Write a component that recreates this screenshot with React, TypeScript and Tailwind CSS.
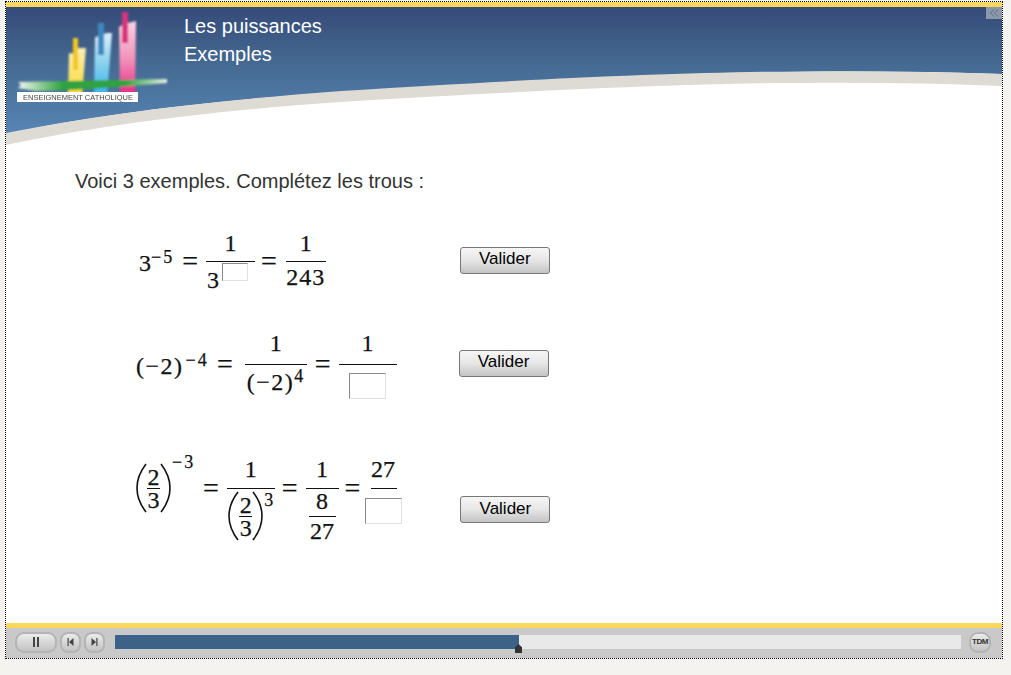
import React from 'react';

const serif = "font-['Liberation_Serif',serif]";

const Frac: React.FC<{
  num: React.ReactNode;
  den: React.ReactNode;
  width: string;
  numH: string;
  denH: string;
}> = ({ num, den, width, numH, denH }) => (
  <div className={`flex flex-col items-center ${width}`}>
    <div className={`flex items-center justify-center ${numH}`}>{num}</div>
    <div className="h-px w-full bg-[#111]"></div>
    <div className={`flex items-center justify-center ${denH}`}>{den}</div>
  </div>
);

const Blank: React.FC<{ size: string }> = ({ size }) => (
  <span
    className={`block ${size} bg-white border border-[#e0e0e0] border-l-[#8a8a8a] border-t-[#8a8a8a]`}
  ></span>
);

const Eq: React.FC<{ className: string }> = ({ className }) => (
  <span className={`text-[28px] leading-none ${className}`}>=</span>
);

const Sup: React.FC<{ children: React.ReactNode; className?: string }> = ({ children, className = '' }) => (
  <span className={`text-[18px] leading-none ${className}`}>{children}</span>
);

// grande parenthèse dessinée
const Paren: React.FC<{ flip?: boolean }> = ({ flip }) => (
  <svg width="11" height="50" viewBox="0 0 11 50" className={flip ? 'block -scale-x-100' : 'block'}>
    <path d="M10 1C3 10 1 18 1 25s2 15 9 24" fill="none" stroke="#111" strokeWidth="1.6" />
  </svg>
);

const TwoThirds: React.FC = () => (
  <div className="flex items-center">
    <Paren />
    <Frac
      width="w-[13px]"
      numH="h-[24px] pt-[2px]"
      denH="h-[24px] pb-[2px]"
      num={<span className="leading-[20px]">2</span>}
      den={<span className="leading-[20px]">3</span>}
    />
    <Paren flip />
  </div>
);

const Valider: React.FC<{ className?: string }> = ({ className = '' }) => (
  <button
    className={`w-[90px] h-[27px] rounded-[3px] border border-[#777] bg-gradient-to-b from-[#f6f6f6] via-[#e6e6e6] to-[#c4c4c4] text-[17px] leading-none text-black pb-[3px] [-webkit-text-stroke:0] font-['Liberation_Sans',sans-serif] ${className}`}
  >
    Valider
  </button>
);

const Banner: React.FC = () => (
  <svg viewBox="0 0 996 140" width="996" height="140" className="block" preserveAspectRatio="none">
    <defs>
      <linearGradient id="sky" x1="0" y1="0" x2="0" y2="1">
        <stop offset="0" stopColor="#354a78" />
        <stop offset="0.45" stopColor="#456a92" />
        <stop offset="1" stopColor="#5785b5" />
      </linearGradient>
      <linearGradient id="yel" x1="0" y1="0" x2="0" y2="1">
        <stop offset="0" stopColor="#fbeeb4" />
        <stop offset="1" stopColor="#fcd92c" />
      </linearGradient>
      <linearGradient id="blu" x1="0" y1="0" x2="0" y2="1">
        <stop offset="0" stopColor="#d9eef8" />
        <stop offset="1" stopColor="#33b2e6" />
      </linearGradient>
      <linearGradient id="pnk" x1="0" y1="0" x2="0" y2="1">
        <stop offset="0" stopColor="#f9d3e3" />
        <stop offset="0.5" stopColor="#f393bb" />
        <stop offset="1" stopColor="#e6267f" />
      </linearGradient>
      <linearGradient id="grn" x1="0" y1="0" x2="1" y2="0">
        <stop offset="0" stopColor="#f2f7ee" />
        <stop offset="0.3" stopColor="#2fa33f" />
        <stop offset="0.72" stopColor="#2fa33f" />
        <stop offset="1" stopColor="#e8f2e4" />
      </linearGradient>
      <filter id="soft">
        <feGaussianBlur stdDeviation="0.8" />
      </filter>
      <filter id="softer">
        <feGaussianBlur stdDeviation="0.3" />
      </filter>
    </defs>
    <rect width="996" height="140" fill="#fff" />
    <path d="M0 0H996V67C800 60 620 68 335 85C200 94 90 108 0 127Z" fill="url(#sky)" />
    <path
      d="M0 126C90 108 200 94 335 84C620 66 800 60 996 67V79C800 71 620 78 335 95C200 104 90 119 0 138Z"
      fill="#dedbd5"
    />
    <g filter="url(#soft)">
      <path d="M63 46L70 47L72 41L80 41L76 89H62Z" fill="url(#yel)" />
      <rect x="67" y="31" width="5" height="32" fill="#f3c81c" />
      <path d="M89 30L96 29L100 26L106 26L101 89H88Z" fill="url(#blu)" />
      <rect x="92" y="16" width="6" height="32" fill="#3d88c0" />
      <path d="M113 20L118 17L130 14L129 89H114Z" fill="url(#pnk)" />
      <rect x="116" y="5" width="6" height="31" fill="#d8357f" />
      <path d="M12 75L161 72V76C110 80 60 84 30 84L12 81L15 78Z" fill="url(#grn)" />
    </g>
    <rect x="11" y="85" width="121" height="10" fill="#fff" />
    <text
      x="17"
      y="93"
      fontSize="7.6"
      fill="#444"
      filter="url(#softer)"
      fontFamily="Liberation Sans, sans-serif"
      textLength="110"
      lengthAdjust="spacingAndGlyphs"
    >
      ENSEIGNEMENT CATHOLIQUE
    </text>
  </svg>
);

const CtrlBtn: React.FC<{ className: string; children: React.ReactNode }> = ({ className, children }) => (
  <button
    className={`flex items-center justify-center h-[21px] border-2 border-[#b4b4b4] bg-gradient-to-b from-[#ececec] to-[#c2c2c2] ${className}`}
  >
    {children}
  </button>
);

const App: React.FC = () => {
  return (
    <div className="w-[1011px] h-[675px] bg-[#f4f3ef] pt-px pl-[5px] overflow-hidden font-['Liberation_Sans',sans-serif]">
      <div className="w-[998px] h-[658px] border border-dotted border-black flex flex-col bg-white">
        <div className="h-[5px] bg-[#fbd75b]"></div>

        {/* En-tête */}
        <header className="relative h-[140px]">
          <Banner />
          <div className="absolute left-[178px] top-[5px] text-[20px] leading-[28px] text-white">
            <p>Les puissances</p>
            <p>Exemples</p>
          </div>
          <div className="absolute right-0 top-0 w-[16px] h-[12px] bg-[#8b98ac] flex items-center justify-center">
            <svg width="10" height="8" viewBox="0 0 10 8">
              <path d="M5 0.5L1.5 4L5 7.5M9 0.5L5.5 4L9 7.5" fill="none" stroke="#5f6f85" strokeWidth="1" />
            </svg>
          </div>
        </header>

        {/* Contenu */}
        <main className={`flex-1 min-h-0 text-[24px] leading-none text-[#111] [-webkit-text-stroke:0.25px_#111] ${serif}`}>
          <p className="pt-[22px] pl-[69px] h-[46px] text-[20px] leading-[24px] text-[#333] [-webkit-text-stroke:0] font-['Liberation_Sans',sans-serif]">
            Voici 3 exemples. Complétez les trous :
          </p>

          <div className="mt-[38px] h-[60px] flex items-center pl-[133px]">
            <span>
              3<Sup className="align-[8px] tracking-[2px]">−5</Sup>
            </span>
            <Eq className="ml-[8px]" />
            <Frac
              width="w-[49px] ml-[8px]"
              numH="h-[30px] pb-[6px]"
              denH="h-[30px] w-full justify-start pl-px"
              num={<span>1</span>}
              den={
                <>
                  <span className="mt-[6px]">3</span>
                  <span className="ml-[3px] mb-[10px]">
                    <Blank size="w-[26px] h-[18px]" />
                  </span>
                </>
              }
            />
            <Eq className="ml-[6px]" />
            <Frac
              width="w-[40px] ml-[9px]"
              numH="h-[30px] pb-[6px]"
              denH="h-[30px] tracking-[1px]"
              num={<span>1</span>}
              den={<span>243</span>}
            />
            <Valider className="ml-[134px] mb-[2px]" />
          </div>

          <div className="mt-[35px] h-[76px] flex items-center pl-[130px]">
            <span className="w-[77px] tracking-[1.5px]">
              (−2)<Sup className="align-[8px] tracking-[2px] ml-[2px]">−4</Sup>
            </span>
            <Eq className="ml-[4px]" />
            <Frac
              width="w-[62px] ml-[12px]"
              numH="h-[38px] pb-[4px]"
              denH="h-[38px] pb-[7px]"
              num={<span>1</span>}
              den={
                <span className="tracking-[1.5px]">
                  (−2)<Sup className="align-[8px]">4</Sup>
                </span>
              }
            />
            <Eq className="ml-[8px]" />
            <Frac
              width="w-[58px] ml-[8px]"
              numH="h-[38px] pb-[4px]"
              denH="h-[38px] pt-[4px]"
              num={<span>1</span>}
              den={<Blank size="w-[37px] h-[26px]" />}
            />
            <Valider className="ml-[62px] mb-[2px]" />
          </div>

          <div className="mt-[31px] h-[110px] flex items-center pl-[130px]">
            <div className="flex items-start w-[59px]">
              <TwoThirds />
              <Sup className="tracking-[2px] ml-[1px] -mt-[10px]">−3</Sup>
            </div>
            <Eq className="ml-[8px]" />
            <Frac
              width="w-[48px] ml-[8px]"
              numH="h-[55px] pt-[18px]"
              denH="h-[55px]"
              num={<span>1</span>}
              den={
                <div className="flex items-start">
                  <TwoThirds />
                  <Sup className="ml-[1px]">3</Sup>
                </div>
              }
            />
            <Eq className="ml-[7px]" />
            <Frac
              width="w-[33px] ml-[8px]"
              numH="h-[55px] pt-[18px]"
              denH="h-[55px] flex-col"
              num={<span>1</span>}
              den={
                <div className="w-[27px]">
                  <div className="text-center pb-[3px]">8</div>
                  <div className="h-px bg-[#111]"></div>
                  <div className="text-center pt-[2px]">27</div>
                </div>
              }
            />
            <Eq className="ml-[6px]" />
            <div className="ml-[5px] w-[37px] flex flex-col items-center">
              <div className="h-[55px] w-[26px] flex flex-col">
                <div className="flex-1 flex items-center justify-center pt-[17px] pr-[2px]">27</div>
              </div>
              <div className="h-px w-[26px] bg-[#111]"></div>
              <div className="h-[55px] pt-[9px]">
                <Blank size="w-[37px] h-[26px]" />
              </div>
            </div>
            <Valider className="ml-[58px] mt-[43px]" />
          </div>
        </main>

        <div className="h-[5px] bg-[#fbd75b]"></div>

        {/* Barre de lecture */}
        <footer className="h-[30px] bg-[#c9c9c9] flex items-center pb-[2px] pl-[9px] pr-[11px]">
          <CtrlBtn className="w-[42px] rounded-[9px]">
            <svg width="10" height="10" viewBox="0 0 10 10">
              <path d="M2 0H4V10H2ZM6 0H8V10H6Z" fill="#444" />
            </svg>
          </CtrlBtn>
          <CtrlBtn className="w-[21px] rounded-[8px] ml-[3px]">
            <svg width="7" height="8" viewBox="0 0 7 8">
              <path d="M0.5 0H1.7V8H0.5ZM6.5 0V8L2 4Z" fill="#444" />
            </svg>
          </CtrlBtn>
          <CtrlBtn className="w-[21px] rounded-[8px] ml-[3px]">
            <svg width="7" height="8" viewBox="0 0 7 8">
              <path d="M6.5 0H5.3V8H6.5ZM0.5 0V8L5 4Z" fill="#444" />
            </svg>
          </CtrlBtn>
          <div className="relative flex-1 h-[14px] ml-[10px] bg-[#e9e9e9]">
            <div className="h-full w-[404px] bg-[#3c6287]"></div>
            <div className="absolute left-[400px] top-[9px] w-[7px] h-[9px] bg-[#333] [clip-path:polygon(50%_0,100%_35%,100%_100%,0_100%,0_35%)]"></div>
          </div>
          <CtrlBtn className="w-[22px] rounded-[9px] ml-[8px]">
            <span className="text-[8px] font-bold leading-none tracking-tighter text-[#333]">TDM</span>
          </CtrlBtn>
        </footer>
      </div>
    </div>
  );
};

export default App;
